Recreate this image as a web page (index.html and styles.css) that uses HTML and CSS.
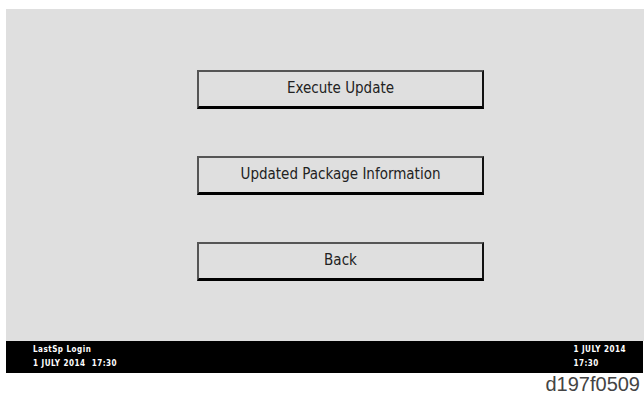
FILE: index.html
```html
<!DOCTYPE html>
<html lang="en">
<head>
    <meta charset="UTF-8">
    <title>Update Menu</title>
    <link rel="stylesheet" href="styles.css">
</head>
<body>
    <div class="screen">
        <div class="panel">
            <div class="menu">
                <button class="menu-btn">Execute Update</button>
                <button class="menu-btn">Updated Package Information</button>
                <button class="menu-btn">Back</button>
            </div>
        </div>
        <div class="status">
            <div class="status-left">
                <div>LastSp Login</div>
                <div>1 JULY 2014 &nbsp;17:30</div>
            </div>
            <div class="status-right">
                <div>1 JULY 2014</div>
                <div>17:30</div>
            </div>
        </div>
    </div>
    <div class="caption">d197f0509</div>
</body>
</html>
```

FILE: styles.css
```css
body { margin: 0; background: #fff; font-family: "Liberation Sans", Arial, sans-serif; }
.screen { margin: 9px 0 0 6px; }
.panel { background: #dfdfdf; height: 332px; box-sizing: border-box; padding: 61px 0 0 191px; }
.menu { display: flex; flex-direction: column; gap: 47px; width: 287px; }
.menu-btn {
    height: 39px; background: #dfdfdf; color: #222;
    border-style: solid; border-width: 2px 2px 3px 2px;
    border-color: #555 #111 #000 #555;
    font-family: "Liberation Sans Narrow", "DejaVu Sans Condensed", sans-serif;
    font-size: 15px; padding: 0 0 3px; cursor: pointer;
}
.status {
    background: #000; color: #fff; height: 32px; margin-right: 1px;
    display: flex; justify-content: space-between; align-items: center;
    font-family: "DejaVu Sans Condensed", sans-serif; font-size: 8px; font-weight: bold;
    letter-spacing: 0.5px; line-height: 14px; padding: 0 17px 0 27px;
}
.caption { text-align: right; color: #444; font-size: 20px; padding: 0 4px 0 0; }
```
